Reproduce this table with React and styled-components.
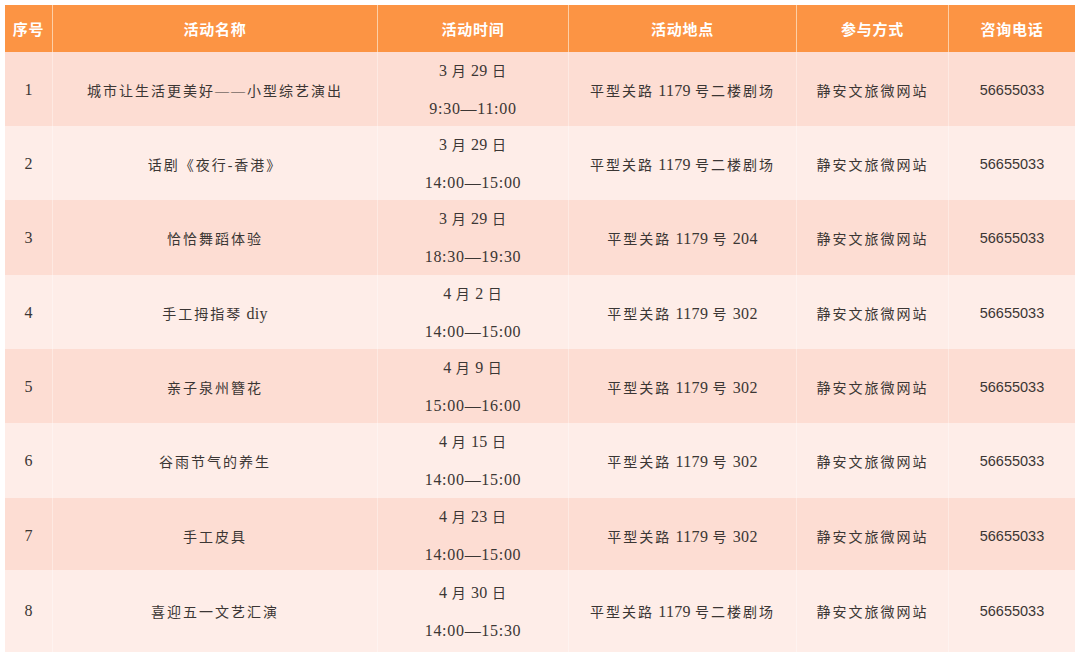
import React from "react";
import styled, { createGlobalStyle } from "styled-components";

const Global = createGlobalStyle`
  html, body { margin: 0; padding: 0; background: #ffffff; }
  body { padding: 5px; font-family: "Liberation Serif", "Noto Sans CJK SC", serif; }
`;

const COLS = "48px 325px 191px 228px 152px 126px";

const Table = styled.div`
  width: 1070px;
  display: flex;
  flex-direction: column;
`;

const HeaderRow = styled.div`
  display: grid;
  grid-template-columns: ${COLS};
  height: 47px;
  background: #fc9444;
`;

const HeaderCell = styled.div`
  display: flex;
  align-items: center;
  justify-content: center;
  color: #ffffff;
  font-family: "Noto Sans CJK SC", sans-serif;
  font-weight: 700;
  font-size: 15px;
  letter-spacing: 0.8px;
  border-right: 1px solid #fdcfa6;
  &:last-child { border-right: none; }
`;

const Row = styled.div`
  display: grid;
  grid-template-columns: ${COLS};
  height: ${(p) => p.$h}px;
  background: ${(p) => (p.$odd ? "#fdddd3" : "#feede8")};
`;

const Cell = styled.div`
  display: flex;
  flex-direction: column;
  align-items: center;
  justify-content: center;
  color: #3b3634;
  font-family: "Liberation Serif", "Noto Sans CJK SC", serif;
  font-size: 14px;
  letter-spacing: ${(p) => (p.$spaced ? "2px" : "0")};
  white-space: pre;
  border-right: 1px solid rgba(255, 255, 255, 0.35);
  &:last-child { border-right: none; }
`;

const IndexCell = styled(Cell)`
  font-size: 16px;
`;

const PhoneCell = styled(Cell)`
  font-family: "Liberation Sans", sans-serif;
  font-size: 14.5px;
`;

const Text = styled.span`
  display: block;
  white-space: pre;
`;

const Num = styled.span`
  font-family: "Liberation Serif", serif;
  font-size: 16px;
  letter-spacing: 0.3px;
`;

const Line = styled.div`
  line-height: 37px;
  font-size: 14px;
  letter-spacing: ${(p) => (p.$time ? "0.7px" : "1px")};
  white-space: pre;
  ${(p) => (p.$time ? "font-size: 16px;" : "")}
`;

function Mixed({ text }) {
  const parts = text.match(/[\x20-\x7e]+|[^\x20-\x7e]+/g) || [];
  return (
    <Text>
      {parts.map((part, i) =>
        /[0-9a-zA-Z]/.test(part) ? <Num key={i}>{part}</Num> : <React.Fragment key={i}>{part}</React.Fragment>
      )}
    </Text>
  );
}

const rows = [
  { n: 1, name: "城市让生活更美好——小型综艺演出", date: "3 月 29 日", time: "9:30—11:00", place: "平型关路 1179 号二楼剧场", h: 74 },
  { n: 2, name: "话剧《夜行-香港》", date: "3 月 29 日", time: "14:00—15:00", place: "平型关路 1179 号二楼剧场", h: 74 },
  { n: 3, name: "恰恰舞蹈体验", date: "3 月 29 日", time: "18:30—19:30", place: "平型关路 1179 号 204", h: 75 },
  { n: 4, name: "手工拇指琴 diy", date: "4 月 2 日", time: "14:00—15:00", place: "平型关路 1179 号 302", h: 74 },
  { n: 5, name: "亲子泉州簪花", date: "4 月 9 日", time: "15:00—16:00", place: "平型关路 1179 号 302", h: 74 },
  { n: 6, name: "谷雨节气的养生", date: "4 月 15 日", time: "14:00—15:00", place: "平型关路 1179 号 302", h: 75 },
  { n: 7, name: "手工皮具", date: "4 月 23 日", time: "14:00—15:00", place: "平型关路 1179 号 302", h: 72 },
  { n: 8, name: "喜迎五一文艺汇演", date: "4 月 30 日", time: "14:00—15:30", place: "平型关路 1179 号二楼剧场", h: 82 },
];

const headers = ["序号", "活动名称", "活动时间", "活动地点", "参与方式", "咨询电话"];

export default function App() {
  return (
    <>
      <Global />
      <Table>
        <HeaderRow>
          {headers.map((h) => (
            <HeaderCell key={h}>{h}</HeaderCell>
          ))}
        </HeaderRow>
        {rows.map((r, i) => (
          <Row key={r.n} $odd={i % 2 === 0} $h={r.h}>
            <IndexCell>{r.n}</IndexCell>
            <Cell $spaced>
              <Mixed text={r.name} />
            </Cell>
            <Cell>
              <Line>
                <Mixed text={r.date} />
              </Line>
              <Line $time>{r.time}</Line>
            </Cell>
            <Cell $spaced>
              <Mixed text={r.place} />
            </Cell>
            <Cell $spaced>静安文旅微网站</Cell>
            <PhoneCell>56655033</PhoneCell>
          </Row>
        ))}
      </Table>
    </>
  );
}
